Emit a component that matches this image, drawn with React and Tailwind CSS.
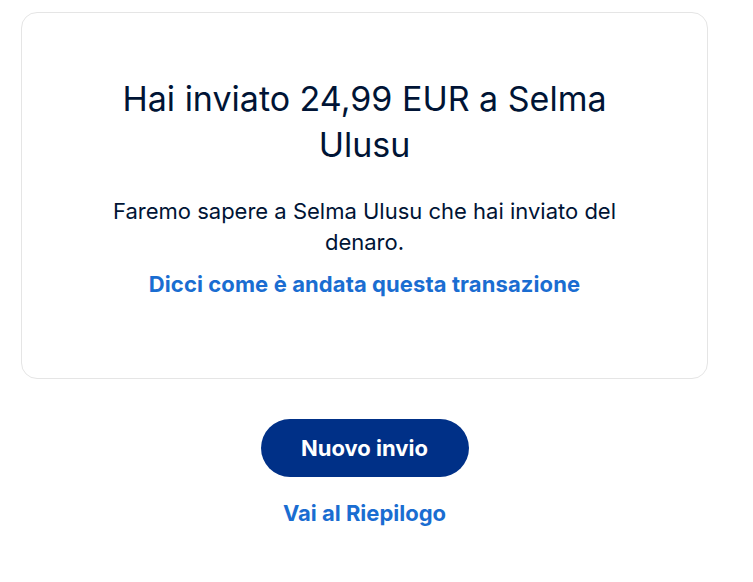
export default function App() {
  return (
    <div className="min-h-[582px] bg-white pl-[21px] pr-[45px] pt-3" style={{ fontFamily: "Inter, 'Liberation Sans', sans-serif" }}>
      <div className="rounded-2xl border border-[#e5e5e5] px-[60px] pt-[63px] pb-[78px] text-center">
        <h1 className="mx-auto max-w-[540px] text-[34px] leading-[46px] font-normal text-[#001435]">
          Hai inviato 24,99 EUR a Selma Ulusu
        </h1>
        <p className="mx-auto mt-[28px] max-w-[540px] text-[22px] leading-[31px] text-[#001435]">
          Faremo sapere a Selma Ulusu che hai inviato del denaro.
        </p>
        <a href="#" className="mt-[11px] inline-block text-[22px] leading-[31px] font-bold tracking-[0.1px] text-[#1a6dd1]">
          Dicci come è andata questa transazione
        </a>
      </div>

      <div className="mt-[40px] flex flex-col items-center">
        <button className="h-[58px] w-[208px] rounded-full bg-[#003087] text-[22px] font-bold text-white">
          Nuovo invio
        </button>
        <a href="#" className="mt-[21px] text-[22px] leading-[31px] font-bold text-[#1a6dd1]">
          Vai al Riepilogo
        </a>
      </div>
    </div>
  );
}
